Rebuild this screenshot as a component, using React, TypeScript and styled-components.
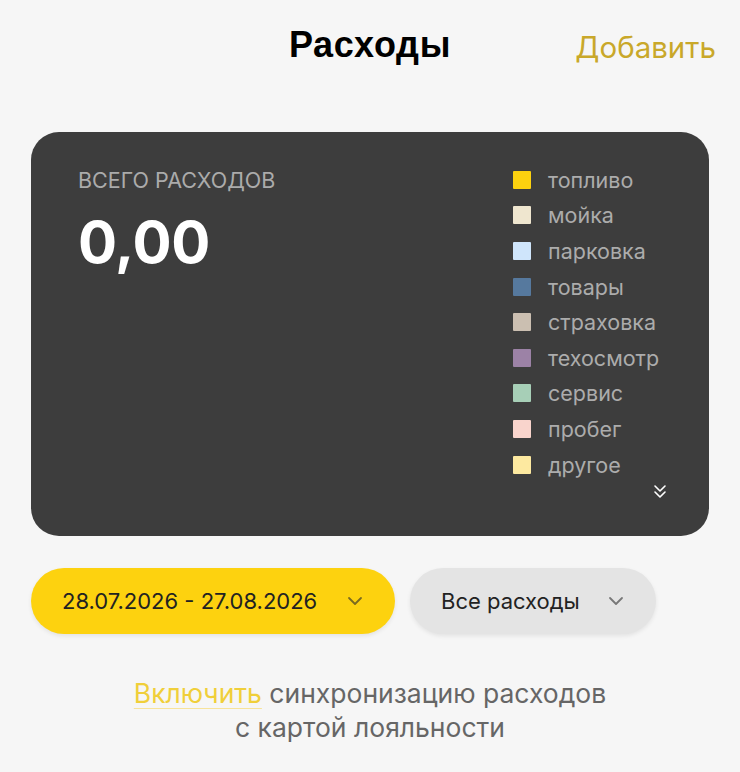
import React from "react";
import styled, { createGlobalStyle } from "styled-components";

const GlobalStyle = createGlobalStyle`
  body {
    margin: 0;
    background: #f6f6f6;
    font-family: Inter, Roboto, "Noto Sans", sans-serif;
  }
`;

const Page = styled.div`
  width: 740px;
  min-height: 772px;
  background: #f6f6f6;
  box-sizing: border-box;
  padding: 0 31px;
`;

const Header = styled.header`
  height: 132px;
  display: grid;
  grid-template-columns: 1fr auto 1fr;
  align-items: start;
  padding-top: 20px;
  box-sizing: border-box;
`;

const Title = styled.h1`
  grid-column: 2;
  margin: 0;
  font-family: "Liberation Sans", Arial, sans-serif;
  font-size: 36px;
  font-weight: 700;
  color: #000;
  line-height: 50px;
  letter-spacing: 0.7px;
`;

const AddLink = styled.a`
  justify-self: end;
  margin-right: -7px;
  font-size: 29.5px;
  color: #c9a82a;
  line-height: 54px;
  cursor: pointer;
`;

const Card = styled.section`
  height: 404px;
  background: #3d3d3d;
  border-radius: 28px;
  display: flex;
  box-sizing: border-box;
  padding: 30px 0 0 47px;
`;

const Total = styled.div`
  flex: 1;
  padding-top: 5px;
`;

const TotalLabel = styled.div`
  font-size: 21.5px;
  color: #ababab;
  line-height: 26px;
`;

const TotalValue = styled.div`
  margin-top: 17px;
  font-size: 58px;
  font-weight: 700;
  color: #fff;
  line-height: 64px;
  letter-spacing: -0.3px;
`;

const Legend = styled.ul`
  width: 196px;
  margin: 0;
  padding: 0;
  list-style: none;
  display: flex;
  flex-direction: column;
`;

const LegendItem = styled.li`
  flex: none;
  height: 35.6px;
  display: flex;
  align-items: center;
  gap: 17px;
  font-size: 21.5px;
  color: #acacac;
`;

const Swatch = styled.span<{ $color: string }>`
  width: 18px;
  height: 18px;
  background: ${(p) => p.$color};
  border-radius: 1px;
  flex: none;
`;

const MoreButton = styled.button`
  flex: none;
  align-self: flex-start;
  margin: 1px 0 0 139px;
  padding: 0;
  width: 16px;
  height: 16px;
  border: none;
  background: none;
  color: #fff;
  display: flex;
  align-items: center;
  justify-content: center;
`;

const Filters = styled.div`
  display: flex;
  gap: 15px;
  margin-top: 32px;
`;

const Pill = styled.button<{ $yellow?: boolean }>`
  height: 66px;
  border: none;
  border-radius: 33px;
  background: ${(p) => (p.$yellow ? "#fdd20f" : "#e4e4e4")};
  box-shadow: 0 2px 4px rgba(0, 0, 0, 0.08);
  display: flex;
  align-items: center;
  justify-content: space-between;
  padding: 0 32px 0 31px;
  font-family: Inter, Roboto, "Noto Sans", sans-serif;
  font-size: 22px;
  color: #222;
  cursor: pointer;
`;

const DatePill = styled(Pill)`
  width: 364px;
`;

const TypePill = styled(Pill)`
  width: 246px;
`;

const Chevron = styled.svg<{ $color: string }>`
  width: 16px;
  height: 10px;
  color: ${(p) => p.$color};
`;

const Sync = styled.p`
  margin: 42px 0 0;
  text-align: center;
  font-size: 26.5px;
  line-height: 34px;
  color: #666;
`;

const SyncLink = styled.a`
  color: #f0cf3a;
  text-decoration: underline;
  text-decoration-color: #f7e39a;
  text-underline-offset: 5px;
  text-decoration-thickness: 1px;
  cursor: pointer;
`;

const categories = [
  { name: "топливо", color: "#fdd20f" },
  { name: "мойка", color: "#efe6cf" },
  { name: "парковка", color: "#cfe5fb" },
  { name: "товары", color: "#56799e" },
  { name: "страховка", color: "#cbbfb1" },
  { name: "техосмотр", color: "#9c82a6" },
  { name: "сервис", color: "#a7cfb7" },
  { name: "пробег", color: "#f9d4cc" },
  { name: "другое", color: "#fde9a0" },
];

function ChevronDown({ color }: { color: string }) {
  return (
    <Chevron $color={color} viewBox="0 0 16 10" fill="none">
      <path d="M2 2l6 6 6-6" stroke="currentColor" strokeWidth="1.8" strokeLinecap="round" strokeLinejoin="round" />
    </Chevron>
  );
}

export default function App() {
  return (
    <>
      <GlobalStyle />
      <Page>
        <Header>
          <Title>Расходы</Title>
          <AddLink>Добавить</AddLink>
        </Header>

        <Card>
          <Total>
            <TotalLabel>ВСЕГО РАСХОДОВ</TotalLabel>
            <TotalValue>0,00</TotalValue>
          </Total>
          <Legend>
            {categories.map((c) => (
              <LegendItem key={c.name}>
                <Swatch $color={c.color} />
                {c.name}
              </LegendItem>
            ))}
            <MoreButton aria-label="Показать все">
              <svg width="16" height="16" viewBox="0 0 16 16" fill="none">
                <path d="M3 3l5 5 5-5M3 9l5 5 5-5" stroke="currentColor" strokeWidth="1.6" strokeLinecap="round" strokeLinejoin="round" />
              </svg>
            </MoreButton>
          </Legend>
        </Card>

        <Filters>
          <DatePill $yellow>
            28.07.2026 - 27.08.2026
            <ChevronDown color="#7a6a20" />
          </DatePill>
          <TypePill>
            Все расходы
            <ChevronDown color="#777" />
          </TypePill>
        </Filters>

        <Sync>
          <SyncLink>Включить</SyncLink> синхронизацию расходов
          <br />с картой лояльности
        </Sync>
      </Page>
    </>
  );
}
